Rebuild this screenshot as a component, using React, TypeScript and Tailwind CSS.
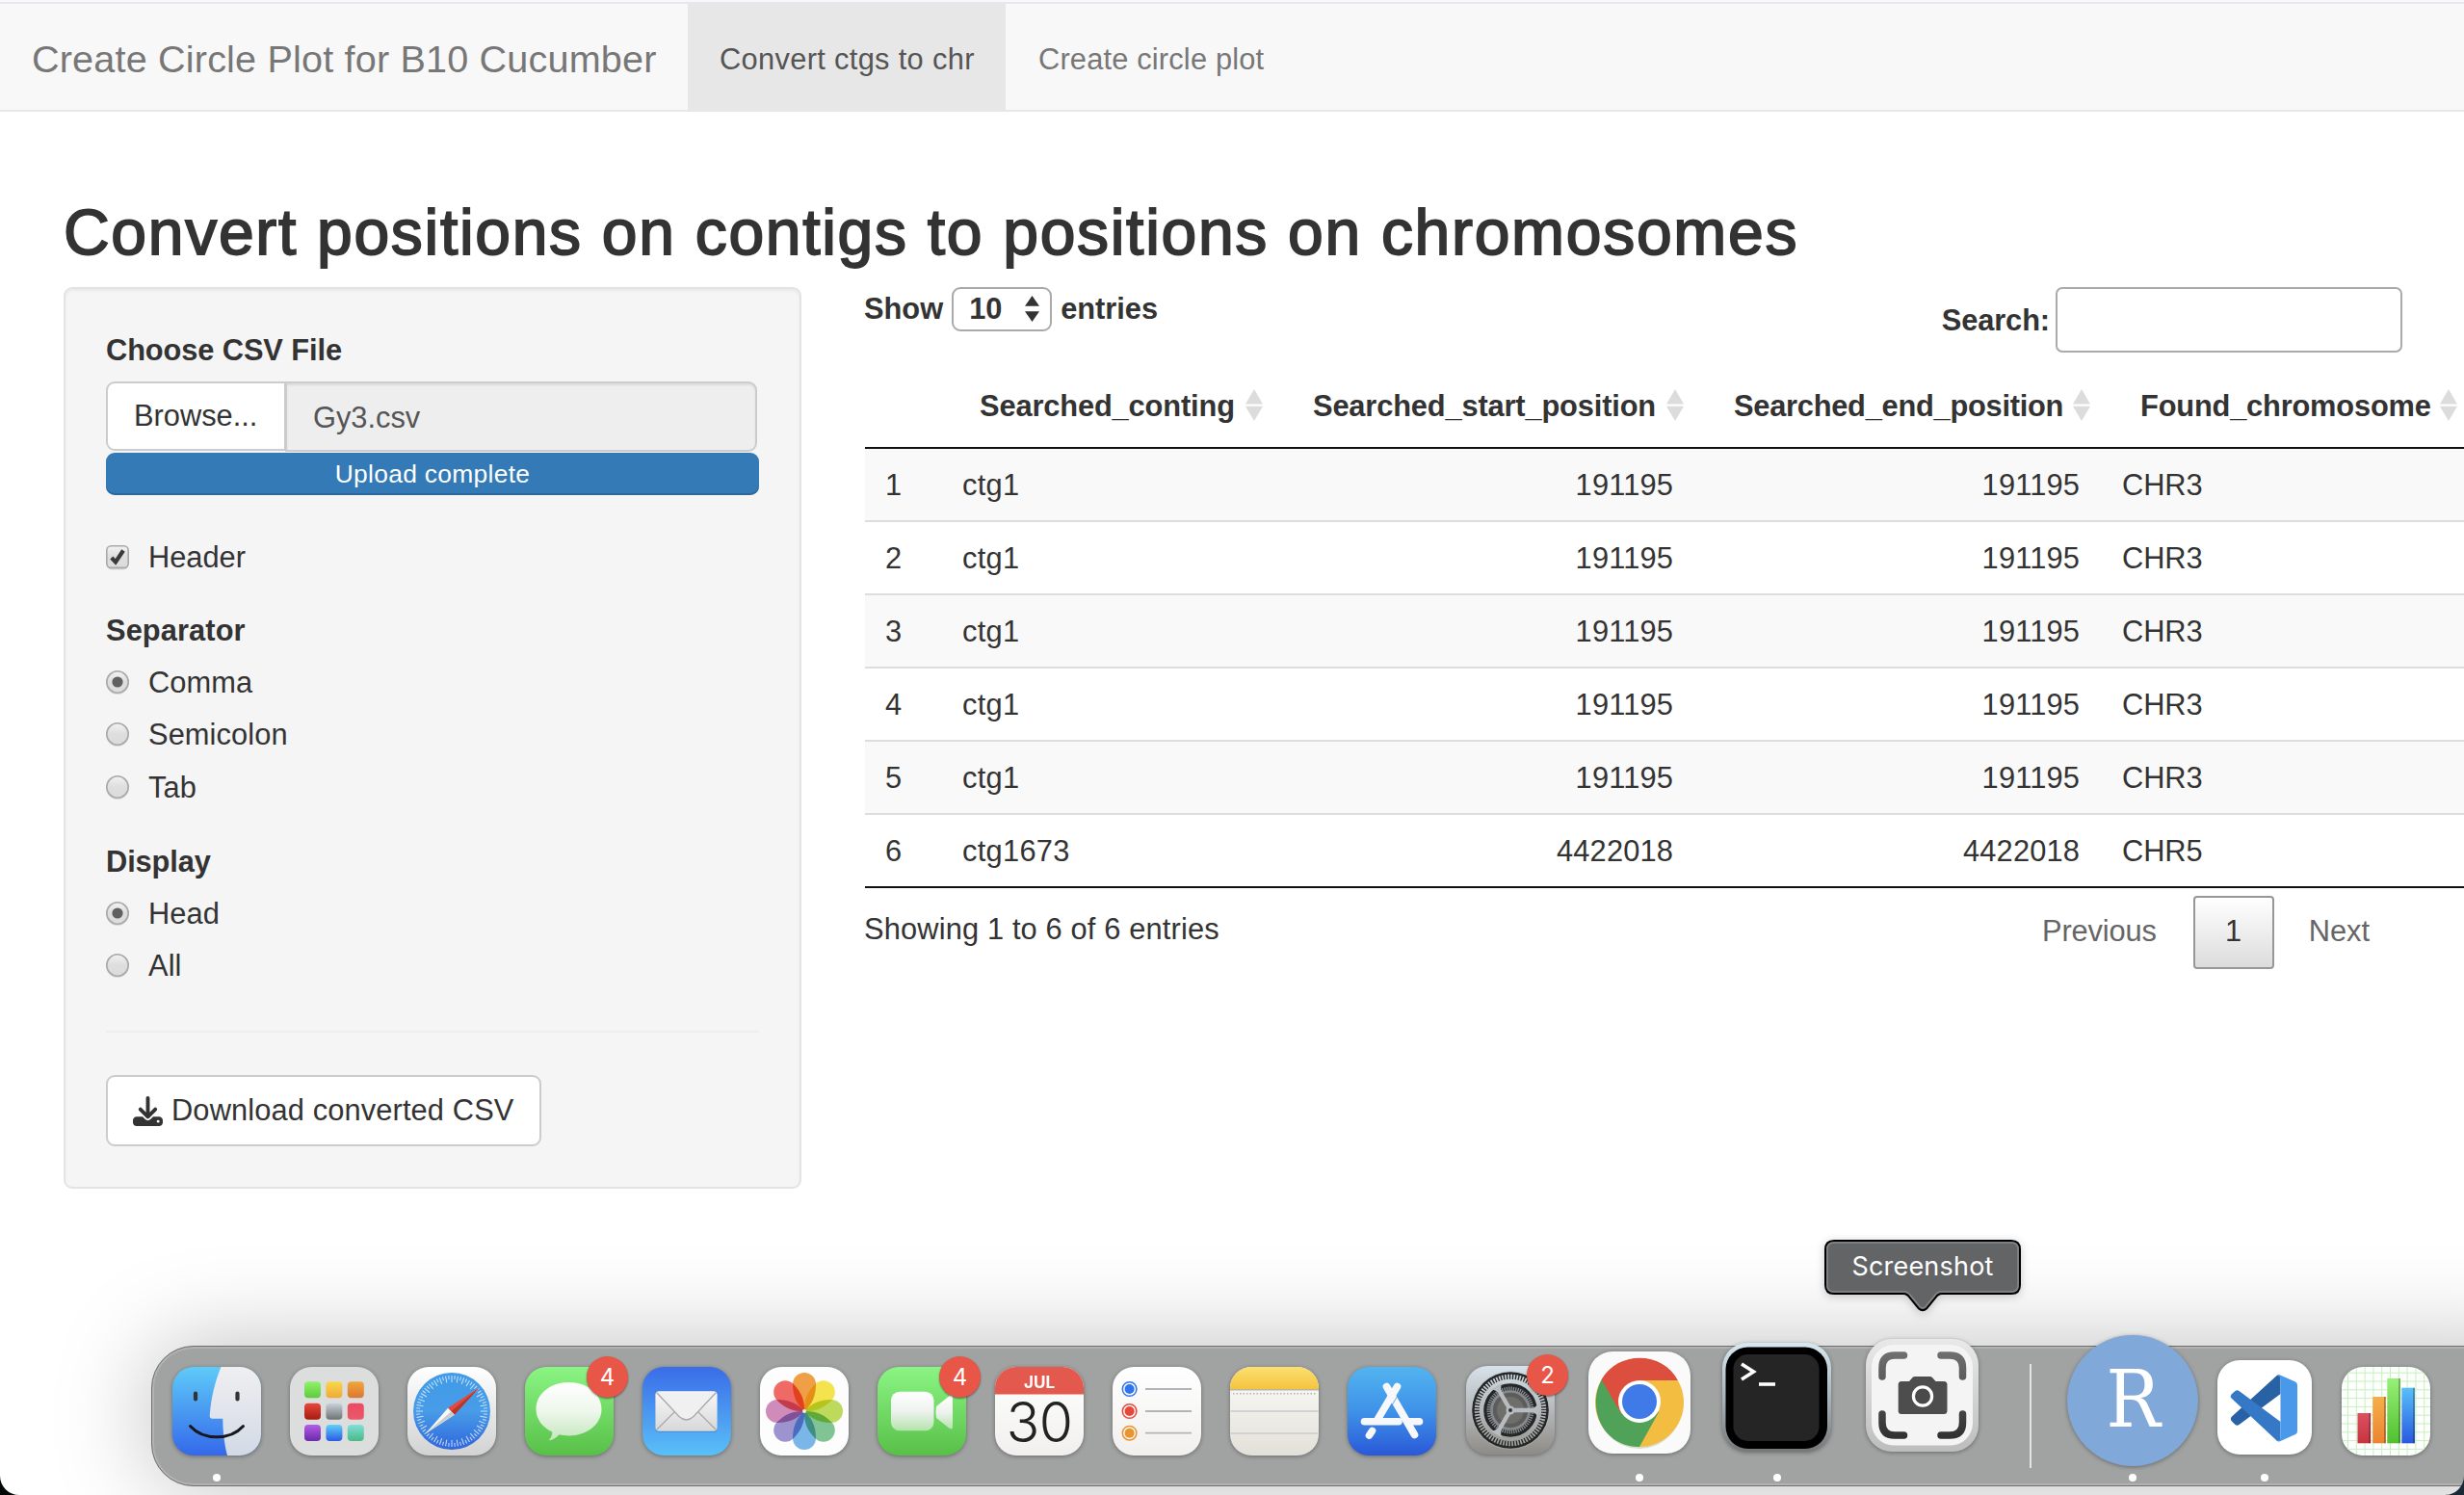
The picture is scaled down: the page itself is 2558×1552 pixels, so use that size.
import type { ReactNode } from "react";

const columns = [
  { name: "Searched_conting", track: "tracking-[-0.13px]" },
  { name: "Searched_start_position", track: "tracking-[-0.15px]" },
  { name: "Searched_end_position", track: "tracking-[-0.25px]" },
  { name: "Found_chromosome", track: "tracking-[-0.18px]" },
];

const rows = [
  ["1", "ctg1", "191195", "191195", "CHR3"],
  ["2", "ctg1", "191195", "191195", "CHR3"],
  ["3", "ctg1", "191195", "191195", "CHR3"],
  ["4", "ctg1", "191195", "191195", "CHR3"],
  ["5", "ctg1", "191195", "191195", "CHR3"],
  ["6", "ctg1673", "4422018", "4422018", "CHR5"],
];

function Navbar() {
  return (
    <nav className="flex h-[116px] border-t-2 border-b-2 border-t-[#f8f8f8] border-b-[#e7e7e7] bg-[#f8f8f8] text-[#777]">
      <div className="flex w-full border-t-2 border-[#e7e7ee] leading-[106px]">
        <div className="w-[714px] shrink-0 pl-[33px] pt-[4px] text-[39.6px] tracking-[0.18px] whitespace-nowrap">
          Create Circle Plot for B10 Cucumber
        </div>
        <div className="w-[330px] shrink-0 bg-[#e7e7e7] pt-[5px] pl-[33px] tracking-[0.33px] text-[#555]">Convert ctgs to chr</div>
        <div className="pt-[5px] pl-[34px] tracking-[0.18px]">Create circle plot</div>
      </div>
    </nav>
  );
}

function Radio({ label, on, h }: { label: string; on?: boolean; h: string }) {
  return (
    <label className={`flex items-center ${h}`}>
      <svg className="mr-[20px] -mt-[2px] size-[24px] overflow-visible" viewBox="0 0 24 24">
        <circle cx="12" cy="13.2" r="11.6" fill="#d6d6d6" />
        <circle cx="12" cy="12" r="11.2" fill="url(#ctl)" stroke="#a9a9a9" strokeWidth="1.6" />
        {on && <circle cx="12" cy="12" r="5.6" fill="#606060" />}
      </svg>
      <span className="tracking-[0.1px]">{label}</span>
    </label>
  );
}

function Sidebar() {
  return (
    <aside className="h-[936px] w-[766px] shrink-0 rounded-[9px] border-2 border-[#e3e3e3] bg-[#f5f5f5] px-[42px] pt-[42px] shadow-[inset_0_2px_3px_rgba(0,0,0,0.05)]">
      <div className="h-[44px] font-bold leading-[44px] tracking-[-0.1px]">Choose CSV File</div>
      <div className="mt-[10px] flex h-[74px] w-[676px] items-start">
        <div className="h-[72px] w-[187px] shrink-0 rounded-l-[9px] border-2 border-[#ccc] bg-white pl-[27px] leading-[68px]">Browse...</div>
        <div className="-ml-[1px] h-[73px] flex-1 rounded-r-[9px] border-2 border-[#ccc] bg-[#eee] pl-[27px] leading-[72px] text-[#555] shadow-[inset_0_2px_2px_rgba(0,0,0,0.075)]">
          Gy3.csv
        </div>
      </div>
      <div className="h-[44px] w-[678px] rounded-[9px] bg-[#337ab7] text-center text-[26.4px] leading-[45px] tracking-[0.3px] text-white shadow-[inset_0_-2px_0_rgba(0,0,0,0.15)]">
        Upload complete
      </div>
      <label className="mt-[42px] flex h-[44px] items-center">
        <svg className="mr-[20px] size-[24px] overflow-visible" viewBox="0 0 24 24">
          <defs>
            <linearGradient id="ctl" x1="0" y1="0" x2="0" y2="1">
              <stop offset="0" stopColor="#f2f2f2" />
              <stop offset="0.5" stopColor="#dedede" />
              <stop offset="1" stopColor="#dcdcdc" />
            </linearGradient>
          </defs>
          <rect x="0.8" y="2.5" width="22.4" height="23" rx="5" fill="#d6d6d6" />
          <rect x="0.8" y="0.8" width="22.4" height="22.6" rx="4.5" fill="url(#ctl)" stroke="#a9a9a9" strokeWidth="1.6" />
          <path d="M5.8 13 L10 17.5 L18 5.5" fill="none" stroke="#3b3b3b" strokeWidth="4.2" />
        </svg>
        <span className="mt-[2px]">Header</span>
      </label>
      <div className="mt-[33px] mb-[5px] h-[44px] font-bold leading-[44px] tracking-[0.1px]">Separator</div>
      <Radio label="Comma" on h="h-[54px]" />
      <Radio label="Semicolon" h="h-[54px]" />
      <Radio label="Tab" h="h-[56px]" />
      <div className="mt-[27px] mb-[5px] h-[44px] font-bold leading-[44px] tracking-[-0.1px]">Display</div>
      <Radio label="Head" on h="h-[54px]" />
      <Radio label="All" h="h-[54px]" />
      <div className="mt-[40px] h-[2px] w-[678px] bg-[#eee]" />
      <button className="mt-[44px] flex h-[74px] w-[452px] items-center rounded-[9px] border-2 border-[#ccc] bg-white pl-[26px] whitespace-nowrap">
        <svg className="mr-[9px] size-[31px] shrink-0" viewBox="0 0 512 512" fill="#333">
          <path d="M288 32c0-17.700-14.300-32-32-32s-32 14.300-32 32v242.700l-73.400-73.400c-12.500-12.500-32.800-12.500-45.300 0s-12.500 32.800 0 45.300l128 128c12.500 12.500 32.800 12.500 45.300 0l128-128c12.500-12.500 12.500-32.800 0-45.300s-32.800-12.500-45.300 0L288 274.700V32zM64 352c-35.300 0-64 28.700-64 64v32c0 35.300 28.700 64 64 64h384c35.300 0 64-28.700 64-64v-32c0-35.300-28.700-64-64-64H346.500l-45.300 45.300c-25 25-65.500 25-90.500 0L165.500 352H64zm368 56a24 24 0 1 1 0 48 24 24 0 1 1 0-48z" />
        </svg>
        <span className="tracking-[0.13px]">Download converted CSV</span>
      </button>
    </aside>
  );
}

function DataTable() {
  return (
    <section className="ml-[66px] w-[1700px] shrink-0">
      <div className="flex h-[92px] items-start">
        <div className="flex h-[46px] items-center font-bold">
          <span className="-ml-px mt-px">Show</span>
          <span className="mr-[9px] ml-[9px] flex h-[46px] w-[104px] items-center rounded-[9px] border-2 border-[#aaa] bg-white pl-[16px]">
            <span className="mt-px w-[58px]">10</span>
            <svg className="-mt-[2px] h-[27px] w-[15px]" viewBox="0 0 15 27" fill="#333">
              <path d="M7.500 0 L15 10.800 H0 Z M7.500 27 L0 16.200 H15 Z" />
            </svg>
          </span>
          <span className="mt-px">entries</span>
        </div>
        <div className="ml-auto flex h-[68px] items-center pr-[104px] font-bold">
          <span className="mt-[3px] tracking-[-0.1px]">Search:</span>
          <span className="ml-[6px] h-[68px] w-[360px] rounded-[7px] border-2 border-[#aaa] bg-white" />
        </div>
      </div>
      <div className="grid h-[76px] grid-cols-[78px_346px_437px_422px_381px] border-b-2 border-[#111] font-bold">
        <div />
        {columns.map((c) => (
          <div key={c.name} className={`flex items-start pt-[10px] pl-[41px] leading-[44px] ${c.track}`}>
            <span className="w-0 flex-1">{c.name}</span>
            <svg className="mt-[4px] mr-[11px] h-[33px] w-[18px] shrink-0" viewBox="0 0 18 33" fill="#dcdcdc">
              <path d="M9 0 L18 15.400 H0 Z M9 33 L0 17.800 H18 Z" />
            </svg>
          </div>
        ))}
      </div>
      <div className="border-b-2 border-[#111]">
        {rows.map((r, i) => (
          <div
            key={r[0]}
            className={`grid grid-cols-[78px_346px_437px_422px_381px] leading-[75px] ${i === 0 ? "h-[74px]" : "h-[76px] border-t-2 border-[#ddd]"} ${i % 2 === 0 ? "bg-[#f9f9f9]" : "bg-white"}`}
          >
            <div className="pl-[21px]">{r[0]}</div>
            <div className="pl-[23px] tracking-[0.3px]">{r[1]}</div>
            <div className="px-[22px] text-right tracking-[0.15px]">{r[2]}</div>
            <div className="px-[22px] text-right tracking-[0.15px]">{r[3]}</div>
            <div className="px-[22px] tracking-[-0.1px]">{r[4]}</div>
          </div>
        ))}
      </div>
      <div className="flex items-start pr-[138px]">
        <div className="-ml-px mt-[21px] leading-[44px] tracking-[0.15px]">Showing 1 to 6 of 6 entries</div>
        <div className="mt-[8px] ml-auto flex h-[76px] items-center text-[#666]">
          <span className="-mt-px tracking-[-0.15px]">Previous</span>
          <span className="mr-[36px] ml-[38px] flex h-[76px] w-[84px] items-center justify-center rounded-[4px] border-2 border-[#979797] bg-linear-to-b from-white to-[#dcdcdc] pb-px text-[#333]">1</span>
          <span className="-mt-px">Next</span>
        </div>
      </div>
    </section>
  );
}

function Grad({ id, a, b, c }: { id: string; a: string; b: string; c?: string }) {
  return (
    <linearGradient id={id} x1="0" y1="0" x2="0" y2="1">
      <stop offset="0" stopColor={a} />
      {c && <stop offset="0.5" stopColor={c} />}
      <stop offset="1" stopColor={b} />
    </linearGradient>
  );
}

function Finder() {
  return (
    <>
      <defs>
        <Grad id="fi" a="#5fcbf9" b="#3468ea" />
        <Grad id="fw" a="#efeff1" b="#d2dae6" />
        <clipPath id="fc"><rect width="92" height="92" rx="22" /></clipPath>
      </defs>
      <g clipPath="url(#fc)">
        <rect width="92" height="92" fill="url(#fi)" />
        <path d="M50.500 0 C44 16 40 32 38.700 51 Q38.500 53.600 41 53.700 H52.300 C52.300 68 54 80 57 92 H92 V0 Z" fill="url(#fw)" />
      </g>
      <path d="M24 27.500 V33.500 M67.500 27.500 V33.500" stroke="#333" strokeWidth="4.200" strokeLinecap="round" />
      <path d="M18.500 61.500 C32 76.500 60 76.500 73.500 61.500" fill="none" stroke="#16181c" strokeWidth="3" strokeLinecap="round" />
    </>
  );
}

const launchColors = [
  ["#8ff26a", "#5fca3e"], ["#f8d84a", "#efa93a"], ["#f0a63a", "#dc7634"],
  ["#e8493a", "#a61b12"], ["#c9d3da", "#6f7274"], ["#ee4a62", "#e85a6a"],
  ["#b45ce8", "#6a2aa8"], ["#5fd0fa", "#2a5ae4"], ["#7fe0d8", "#4ab884"],
];

function Launchpad() {
  return (
    <>
      <rect width="92" height="92" rx="22" fill="#dcdddd" />
      {launchColors.map(([a, b], i) => (
        <g key={a}>
          <defs><Grad id={`lp${i}`} a={a} b={b} /></defs>
          <rect x={15 + (i % 3) * 22.4} y={15.300 + Math.floor(i / 3) * 22.400} width="17" height="17" rx="4" fill={`url(#lp${i})`} />
        </g>
      ))}
    </>
  );
}

function Safari() {
  return (
    <>
      <defs>
        <Grad id="sb" a="#ffffff" b="#d2d2d2" />
        <Grad id="sc" a="#3f9be8" b="#2f66dc" c="#489ce8" />
      </defs>
      <rect width="92" height="92" rx="22" fill="url(#sb)" />
      <circle cx="46" cy="46" r="40" fill="url(#sc)" />
      {Array.from({ length: 72 }, (_, i) => (
        <line key={i} x1="46" x2="46" y1="9" y2={i % 2 ? 13 : 16} stroke="#e6f0fb" strokeWidth="1" opacity="0.85" transform={`rotate(${i * 5} 46 46)`} />
      ))}
      <path d="M74.500 21.500 L42 42.700 L48.800 49.800 Z" fill="#e24a3c" />
      <path d="M74.500 21.500 L45.500 46.200 L48.800 49.800 Z" fill="#b8352c" />
      <path d="M18.500 69.500 L42 42.700 L48.800 49.800 Z" fill="#f8f8f8" />
      <path d="M18.500 69.500 L45.500 46.200 L48.800 49.800 Z" fill="#c9ccd0" />
    </>
  );
}

function Messages() {
  return (
    <>
      <defs>
        <Grad id="mg" a="#8bf584" b="#58c048" />
        <Grad id="mb" a="#ffffff" b="#c4e6bd" c="#eef7ec" />
      </defs>
      <rect width="92" height="92" rx="22" fill="url(#mg)" />
      <path d="M45.500 16 C64.500 16 79.500 28 79.500 43.700 C79.500 59.500 64.500 71.400 45.500 71.400 C42 71.400 38.500 71 35.500 70.200 C33 73.500 29 75.800 24.500 76.300 C27 74 28.300 71 28.300 67.500 C17.500 62.500 11.500 53.500 11.500 43.700 C11.500 28 26.500 16 45.500 16 Z" fill="url(#mb)" />
    </>
  );
}

function Mail() {
  return (
    <>
      <defs>
        <Grad id="ml" a="#3a6ce8" b="#5ac0f8" />
        <Grad id="me" a="#f8f8f8" b="#d8d8d8" />
      </defs>
      <rect width="92" height="92" rx="22" fill="url(#ml)" />
      <rect x="13.400" y="26.500" width="64.200" height="41.500" rx="4" fill="#2c62b4" opacity="0.35" />
      <rect x="13.400" y="25.300" width="64.200" height="41.400" rx="4" fill="url(#me)" />
      <path d="M14.500 65.500 L33 47 M76.500 65.500 L58 47" stroke="#a9a9a9" strokeWidth="1.200" fill="none" />
      <path d="M14.500 26.500 L38 51.500 Q45.500 58.500 53 51.500 L76.500 26.500" fill="#f0f0f0" stroke="#a9a9a9" strokeWidth="1.300" />
    </>
  );
}

const petals = ["#f09632", "#f5e23a", "#b9d84c", "#74c088", "#6cb0e8", "#9488cc", "#cc80b4", "#f05a56"];

function Photos() {
  return (
    <>
      <rect width="92" height="92" rx="22" fill="#fdfdfd" />
      <g transform="translate(46 46)">
        {petals.map((c, i) => (
          <path key={c} d="M0 0 C-8 -7 -12 -16 -12 -28 A12 12 0 0 1 12 -28 C12 -16 8 -7 0 0 Z" fill={c} opacity="0.9" className="mix-blend-multiply" transform={`rotate(${i * 45})`} />
        ))}
        <circle r="2" fill="#eee" />
      </g>
    </>
  );
}

function FaceTime() {
  return (
    <>
      <defs><Grad id="fv" a="#ffffff" b="#b4e4ac" c="#eef2ee" /></defs>
      <rect width="92" height="92" rx="22" fill="url(#mg)" />
      <rect x="14" y="25.700" width="44.500" height="40.600" rx="9" fill="url(#fv)" />
      <path d="M61 41 L74.500 30.200 Q78 28 78 32 V62 Q78 66 74.500 63.800 L61 53 Q59.800 47 61 41 Z" fill="url(#fv)" />
    </>
  );
}

function Calendar() {
  return (
    <>
      <defs>
        <clipPath id="cc"><rect width="92" height="92" rx="22" /></clipPath>
        <Grad id="cw" a="#ffffff" b="#f1f0ee" />
      </defs>
      <g clipPath="url(#cc)">
        <rect width="92" height="92" fill="url(#cw)" />
        <rect width="92" height="28.500" fill="#e3594d" />
      </g>
      <text x="46" y="22" textAnchor="middle" fill="#fff" className="font-['Inter'] text-[17px] font-bold">JUL</text>
      <text x="46" y="77.700" textAnchor="middle" fill="#222" className="font-['Inter'] text-[57px] font-light tracking-[-0.5px]">30</text>
    </>
  );
}

function Reminders() {
  return (
    <>
      <rect width="92" height="92" rx="22" fill="url(#cw)" />
      {[["#2f74ee", 23], ["#e8483a", 46], ["#ea9430", 68.700]].map(([c, y]) => (
        <g key={c}>
          <circle cx="17.600" cy={y} r="7.300" fill="none" stroke={c as string} strokeWidth="1.500" />
          <circle cx="17.600" cy={y} r="5" fill={c as string} />
          <line x1="34" x2="82" y1={y} y2={y} stroke="#b4b4b8" strokeWidth="1.800" />
        </g>
      ))}
    </>
  );
}

function Notes() {
  return (
    <>
      <defs>
        <Grad id="ny" a="#fbe070" b="#f5c440" />
        <Grad id="nw" a="#fcfcfa" b="#e2e0d8" />
      </defs>
      <g clipPath="url(#cc)">
        <rect width="92" height="92" fill="url(#nw)" />
        <rect width="92" height="23" fill="url(#ny)" />
        <rect y="23" width="92" height="1.500" fill="#b9b6a8" />
      </g>
      <path d="M3 27.800 H90" stroke="#b5b3ab" strokeWidth="1.500" strokeDasharray="1.500 2" />
      <path d="M0.500 46 H91.500 M0.500 69 H91.500" stroke="#d2d2d4" strokeWidth="1.800" />
    </>
  );
}

function AppStore() {
  return (
    <>
      <defs><Grad id="as" a="#52b4f0" b="#2a58d8" c="#3f92e8" /></defs>
      <rect width="92" height="92" rx="22" fill="url(#as)" />
      <g fill="none" stroke="#f6f8fb" strokeWidth="7.600" strokeLinecap="round">
        <path d="M17.500 56.700 H53 M64 56.700 H74.500" />
        <path d="M40.500 20.500 L69.500 70.500" />
        <path d="M51.500 20.500 L31.500 54" />
        <path d="M25.500 66.500 L22.500 71" />
      </g>
      <path d="M55.500 24 L46.500 39" stroke="#5a9fe0" strokeWidth="0.900" />
    </>
  );
}

function Settings() {
  return (
    <>
      <defs>
        <Grad id="sg" a="#d8e2ea" b="#8f8b86" c="#b4b8ba" />
        <Grad id="sr" a="#c8d2d8" b="#a0a09c" />
      </defs>
      <rect width="92" height="92" rx="22" fill="url(#sg)" />
      <circle cx="46" cy="46" r="41" fill="url(#sr)" />
      <circle cx="46" cy="46" r="39.800" fill="#242628" />
      <circle cx="46" cy="46" r="34.500" fill="none" stroke="url(#sr)" strokeWidth="5.500" strokeDasharray="1.700 1.310" />
      <circle cx="46" cy="46" r="30" fill="none" stroke="url(#sr)" strokeWidth="4.500" />
      <circle cx="46" cy="46" r="22" fill="none" stroke="#868c90" strokeWidth="5" strokeDasharray="1.300 1" />
      <circle cx="46" cy="46" r="19.500" fill="#5c5c5a" stroke="#85898b" strokeWidth="2.600" />
      <circle cx="46" cy="46" r="14" fill="#6e6e6b" />
      {[0, 120, 240].map((a) => (
        <path key={a} d="M46 43.800 H68 Q73 43.500 75 38 V54 Q73 48.500 68 48.200 H46 Z" fill="#b6bcc0" transform={`rotate(${a} 46 46)`} />
      ))}
      <circle cx="46" cy="46" r="4.500" fill="#b6bcc0" />
      <circle cx="46" cy="46" r="2" fill="#333" />
    </>
  );
}

function Chrome() {
  return (
    <>
      <rect width="106" height="106" rx="25" fill="#fafafa" />
      <ellipse cx="53" cy="56" rx="44" ry="45" fill="#7c9a6c" opacity="0.3" />
      <circle cx="53" cy="53" r="46" fill="#f3bd42" />
      <path d="M53 53 L33.500 64 L14.700 27.500 C-2 55 12 99 53 99 L73 63 Z" fill="#4fa257" />
      <path d="M13.600 29.300 C31 -2 78 0 92.800 30 H53 L33.500 64 Z" fill="#dc4f3e" />
      <circle cx="53" cy="52" r="22" fill="#fff" />
      <circle cx="53" cy="52" r="18" fill="#4079e8" />
    </>
  );
}

function Terminal() {
  return (
    <>
      <defs><Grad id="tm" a="#d8e8f0" b="#76787a" c="#a8b4bc" /></defs>
      <rect width="113" height="113" rx="26" fill="url(#tm)" />
      <rect x="3.500" y="4.500" width="105.500" height="105.500" rx="23" fill="#000" />
      <rect x="11.500" y="12" width="89" height="90" rx="15" fill="#252525" />
      <path d="M20 22 L32.500 30 L20 38" fill="none" stroke="#fff" strokeWidth="3.600" />
      <path d="M38 43 H55" stroke="#fff" strokeWidth="3.600" />
    </>
  );
}

function ScreenshotApp() {
  return (
    <>
      <defs>
        <Grad id="so" a="#e9e9e9" b="#bdbdbd" />
        <linearGradient id="sk" gradientUnits="userSpaceOnUse" x1="0" y1="13" x2="0" y2="104">
          <stop offset="0" stopColor="#707070" />
          <stop offset="1" stopColor="#303030" />
        </linearGradient>
      </defs>
      <rect width="117" height="117" rx="27" fill="url(#so)" />
      <rect x="6" y="6" width="105" height="104.500" rx="23" fill="#f4f4f4" />
      <g fill="none" stroke="url(#sk)" strokeWidth="7.500" strokeLinecap="round">
        <path d="M17 39 V30 Q17 17 30 17 H39.500" />
        <path d="M78 17 H87 Q100.500 17 100.500 30 V39" />
        <path d="M17 78 V87 Q17 100 30 100 H39.500" />
        <path d="M78 100 H87 Q100.500 100 100.500 87 V78" />
      </g>
      <path d="M37 44 H45 L48.500 40 Q49.500 39 51 39 H66.500 Q68 39 69 40 L72.500 44 H81 Q84.500 44 84.500 47.500 V74.500 Q84.500 78 81 78 H37 Q33.700 78 33.700 74.500 V47.500 Q33.700 44 37 44 Z" fill="#4d4d4d" />
      <circle cx="59" cy="59.500" r="9.600" fill="#4a4a4a" stroke="#fff" strokeWidth="3.200" />
    </>
  );
}

function RStudio() {
  return (
    <>
      <circle cx="68" cy="68" r="68" fill="#80a8d8" />
      <text x="0" y="0" transform="translate(40.500 95.300) scale(0.9 1)" fill="#fff" className="font-['DejaVu_Serif'] text-[83px]">R</text>
    </>
  );
}

function VSCode() {
  return (
    <>
      <rect width="98" height="98" rx="23" fill="#fff" />
      <path d="M14.500 59 Q13 61 14.500 63 L18.500 67 Q20.500 68.500 22.500 67 L65.500 35 V16 Q62.500 14.500 60 17.500 Z" fill="#2862a4" />
      <path d="M14.500 39.500 Q13 37.500 14.500 35.500 L18.500 32 Q20.500 30.500 22.500 32 L65.500 64 V83.500 Q62.500 85.500 60 82 Z" fill="#3478c6" />
      <path d="M65 15.500 L81 22.500 Q83 23.500 83 26 V73.500 Q83 76 81 77 L65 84.300 Q63 84.800 61.500 83.500 Q65 84 65.500 80 V20 Q65 15.500 61.500 16.200 Q63 15 65 15.500 Z" fill="#4a98ea" />
    </>
  );
}

const bars = [
  { x: 16.5, y: 48, a: "#dc5060", b: "#c83440" },
  { x: 32.2, y: 31, a: "#f4b048", b: "#ec8430" },
  { x: 47.3, y: 12, a: "#98f078", b: "#50c030" },
  { x: 62.3, y: 21.7, a: "#58c0f8", b: "#2858e0" },
];

function NumbersApp() {
  return (
    <>
      <rect width="92" height="92" rx="22" fill="#fdfffc" />
      <g clipPath="url(#cc)" stroke="#c9eec2" strokeWidth="1">
        {Array.from({ length: 10 }, (_, i) => (
          <g key={i}>
            <line x1={6.5 + i * 8.8} x2={6.5 + i * 8.8} y1="0" y2="92" />
            <line y1={6.200 + i * 8.800} y2={6.200 + i * 8.800} x1="0" x2="92" />
          </g>
        ))}
      </g>
      {bars.map((b, i) => (
        <g key={b.x}>
          <defs><Grad id={`nb${i}`} a={b.a} b={b.b} /></defs>
          <rect x={b.x} y={b.y} width="13.600" height={79.300 - b.y} fill={`url(#nb${i})`} />
          <rect x={b.x + 11.800} y={b.y} width="1.800" height={79.300 - b.y} fill="#000" opacity="0.28" />
        </g>
      ))}
    </>
  );
}

function Badge({ children, pos }: { children: ReactNode; pos: string }) {
  return (
    <span className={`absolute flex size-[43px] items-center justify-center rounded-full bg-[#e75646] font-['Inter'] text-[24px] text-white shadow-[0_1px_2px_rgba(0,0,0,0.45)] ${pos}`}>
      {children}
    </span>
  );
}

function DockApp({ box, view, dot, children, badge, badgePos = "-top-[11px] -right-[15px]" }: { box: string; view: number; dot?: string; children: ReactNode; badge?: string; badgePos?: string }) {
  return (
    <div className={`relative shrink-0 ${box}`}>
      <svg className="size-full overflow-visible drop-shadow-[0_1px_2px_rgba(0,0,0,0.35)]" viewBox={`0 0 ${view} ${view}`}>{children}</svg>
      {badge && <Badge pos={badgePos}>{badge}</Badge>}
      {dot && <span className={`absolute left-1/2 size-[8px] -translate-x-1/2 rounded-full bg-white ${dot}`} />}
    </div>
  );
}

function Dock() {
  return (
    <div className="absolute top-[1397px] left-[157px] flex h-[146px] w-[2500px] items-end rounded-[44px] border border-[#6d6e6d] bg-[#a1a3a2] pb-[31px] pl-[21px] shadow-[inset_0_0_0_2px_#b1b2b1,0_0_100px_rgba(0,0,0,0.26)]">
      <DockApp box="size-[92px]" view={92} dot="-bottom-[27px]"><Finder /></DockApp>
      <DockApp box="ml-[30px] size-[92px]" view={92}><Launchpad /></DockApp>
      <DockApp box="ml-[30px] size-[92px]" view={92}><Safari /></DockApp>
      <DockApp box="ml-[30px] size-[92px]" view={92} badge="4"><Messages /></DockApp>
      <DockApp box="ml-[30px] size-[92px]" view={92}><Mail /></DockApp>
      <DockApp box="ml-[30px] size-[92px]" view={92}><Photos /></DockApp>
      <DockApp box="ml-[30px] size-[92px]" view={92} badge="4"><FaceTime /></DockApp>
      <DockApp box="ml-[30px] size-[92px]" view={92}><Calendar /></DockApp>
      <DockApp box="ml-[30px] size-[92px]" view={92}><Reminders /></DockApp>
      <DockApp box="ml-[30px] size-[92px]" view={92}><Notes /></DockApp>
      <DockApp box="ml-[30px] size-[92px]" view={92}><AppStore /></DockApp>
      <DockApp box="mb-[1px] ml-[31px] size-[92px]" view={92} badge="2" badgePos="-top-[12px] -right-[14px]"><Settings /></DockApp>
      <DockApp box="mb-[2px] ml-[35px] size-[106px]" view={106} dot="-bottom-[29px]"><Chrome /></DockApp>
      <DockApp box="mb-[4px] ml-[33px] size-[113px]" view={113} dot="-bottom-[31px]"><Terminal /></DockApp>
      <DockApp box="mb-[4px] ml-[36px] size-[117px]" view={117}><ScreenshotApp /></DockApp>
      <div className="-mb-[13px] ml-[53px] h-[108px] w-[2px] shrink-0 bg-[#e4e4e4]" />
      <DockApp box="-mb-[11px] ml-[37px] size-[136px]" view={136} dot="-bottom-[16px]"><RStudio /></DockApp>
      <DockApp box="mb-[1px] ml-[20px] size-[98px]" view={98} dot="-bottom-[28px]"><VSCode /></DockApp>
      <DockApp box="ml-[31px] size-[92px]" view={92}><NumbersApp /></DockApp>
    </div>
  );
}

function Tooltip() {
  return (
    <div className="absolute top-[1287px] left-[1894px] h-[74px] w-[204px]">
      <svg className="absolute inset-0 size-full overflow-visible drop-shadow-[0_2px_5px_rgba(0,0,0,0.2)]" viewBox="0 0 204 74">
        <path d="M10 1 H194 Q203 1 203 10 V47 Q203 56 194 56 H122 Q118 56 115.500 60 L106 71.500 Q102 75 98 71.500 L88.500 60 Q86 56 82 56 H10 Q1 56 1 47 V10 Q1 1 10 1 Z" fill="#636466" stroke="#000" strokeWidth="2" />
        <path d="M10 3 H194 Q201 3 201 10 V47 Q201 54 194 54 H121 Q117 54 114 58.500 L105 69.500 Q102 72 99 69.500 L90 58.500 Q87 54 83 54 H10 Q3 54 3 47 V10 Q3 3 10 3 Z" fill="none" stroke="#858688" strokeWidth="1.600" />
      </svg>
      <div className="relative text-center font-['Inter'] text-[27px] leading-[55px] tracking-[0.2px] text-white">Screenshot</div>
    </div>
  );
}

export default function App() {
  return (
    <div className="relative h-[1552px] w-[2558px] overflow-hidden bg-white font-['Liberation_Sans',Arial,sans-serif] text-[30.8px] text-[#333]">
      <Navbar />
      <h2 className="mt-[92px] ml-[66px] h-[90px] text-[66px] leading-[66px] tracking-[1.7px] whitespace-nowrap [-webkit-text-stroke:1.8px_#333]">
        Convert positions on contigs to positions on chromosomes
      </h2>
      <main className="flex pl-[66px]">
        <Sidebar />
        <DataTable />
      </main>
      <Dock />
      <Tooltip />
      <svg className="absolute bottom-0 left-0 size-[20px]" viewBox="0 0 20 20"><path d="M0 0 A20 20 0 0 0 20 20 H0 Z" fill="#020806" /></svg>
      <svg className="absolute right-0 bottom-0 size-[20px]" viewBox="0 0 20 20"><path d="M20 0 A20 20 0 0 1 0 20 H20 Z" fill="#1b2836" /></svg>
    </div>
  );
}
